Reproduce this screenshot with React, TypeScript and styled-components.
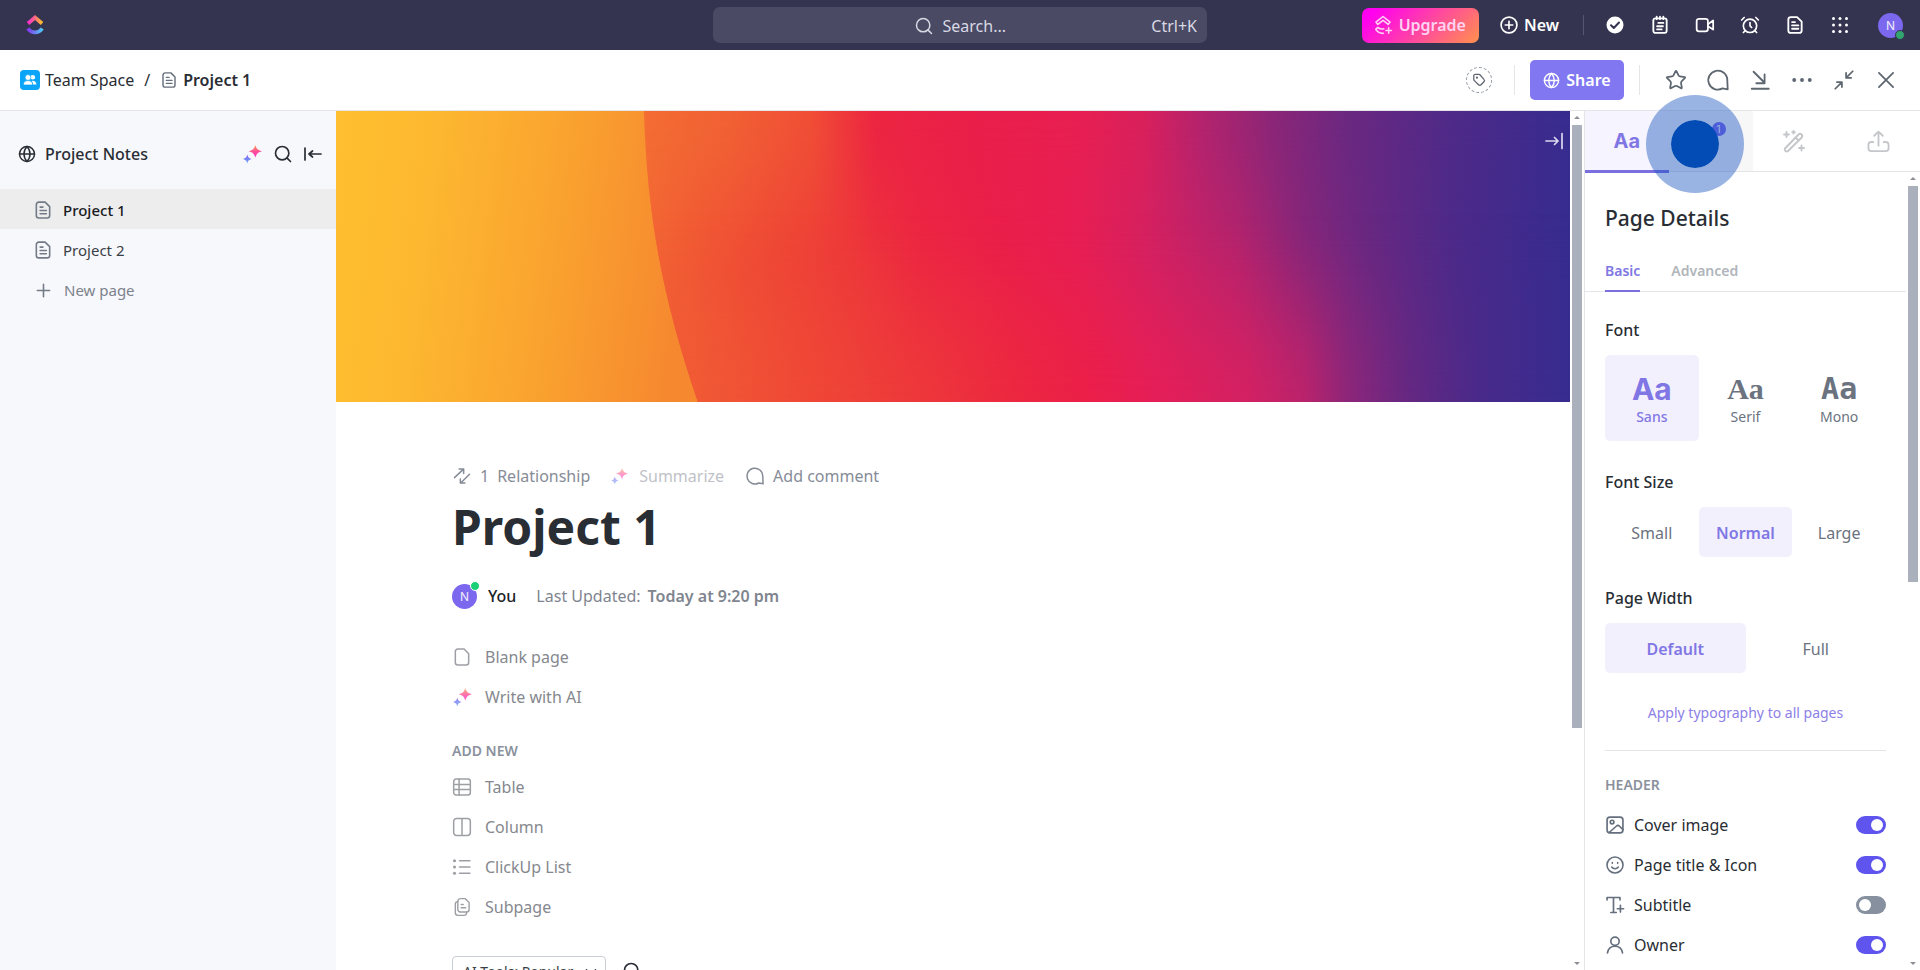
import React, { useState } from 'react';
import styled, { createGlobalStyle, css } from 'styled-components';
import { AlarmClock, ChevronDown, Globe, Plus, Search, Star } from 'lucide-react';

const GlobalStyle = createGlobalStyle`
  *, *::before, *::after { box-sizing: border-box; }
  body {
    margin: 0;
    background: #fff;
    color: #292d34;
    font-family: "Noto Sans", "Open Sans", sans-serif;
    font-size: 16px;
  }
  button, input, select { font: inherit; color: inherit; }
  button { border: 0; padding: 0; background: none; cursor: pointer; }
  a { color: inherit; text-decoration: none; }
  h1, h2, h3, p, ul { margin: 0; padding: 0; }
  ul { list-style: none; }
  svg { display: block; flex: none; }
`;

/* ---------- icons ---------- */

type GlyphProps = { size?: number; stroke?: number; children: React.ReactNode };

const Glyph = ({ size = 20, stroke = 1.8, children }: GlyphProps) => (
  <svg
    width={size}
    height={size}
    viewBox="0 0 24 24"
    fill="none"
    stroke="currentColor"
    strokeWidth={stroke}
    strokeLinecap="round"
    strokeLinejoin="round"
    aria-hidden="true"
  >
    {children}
  </svg>
);

const DocIcon = ({ size = 20, stroke = 1.9 }) => (
  <Glyph size={size} stroke={stroke}>
    <path d="M7 2.500h7.500L20 8v10.500a3 3 0 0 1-3 3H7a3 3 0 0 1-3-3v-13a3 3 0 0 1 3-3z" />
    <path d="M8.500 8.500h3.500M8.500 12.500h7.500M8.500 16.500h7.500" />
  </Glyph>
);

const BlankIcon = () => (
  <Glyph size={20}>
    <path d="M7 2.500h7.500L20 8v10.500a3 3 0 0 1-3 3H7a3 3 0 0 1-3-3v-13a3 3 0 0 1 3-3z" />
  </Glyph>
);

const SubpageIcon = () => (
  <Glyph size={20} stroke={1.7}>
    <path d="M10 2h6l4.500 4.500V15a3 3 0 0 1-3 3H10a3 3 0 0 1-3-3V5a3 3 0 0 1 3-3z" />
    <path d="M7 5.500a3 3 0 0 0-3 3V19a3 3 0 0 0 3 3h7.500a3 3 0 0 0 3-3.500" />
    <path d="M11 9h2.500M11 13h5.500" />
  </Glyph>
);

const CommentIcon = ({ size = 20, stroke = 1.8 }) => (
  <Glyph size={size} stroke={stroke}>
    <path d="M21.300 12A9.500 9.500 0 1 0 16.500 20.400L21.700 21.400z" />
  </Glyph>
);

const RelationIcon = () => (
  <Glyph size={20}>
    <path d="M3 14 13.500 4M8.500 3.500h5.500V9M21 10 10.500 20.500M15.500 20.500H10V15.500" />
  </Glyph>
);

const TableIcon = () => (
  <Glyph size={20}>
    <rect x="2" y="2.500" width="20" height="19" rx="3" />
    <path d="M2 9h20M2 15h20M8.500 2.500v19" />
  </Glyph>
);

const ColumnIcon = () => (
  <Glyph size={20}>
    <rect x="2" y="1.800" width="20" height="20.400" rx="3.500" />
    <path d="M12 2v20" />
  </Glyph>
);

const ListIcon = () => (
  <Glyph size={20}>
    <path d="M9 4.500h12.500M9 12h12.500M9 19.500h12.500" />
    <g fill="currentColor" stroke="none">
      <circle cx="3" cy="4.500" r="1.900" />
      <circle cx="3" cy="12" r="1.900" />
      <circle cx="3" cy="19.500" r="1.900" />
    </g>
  </Glyph>
);

const NotepadIcon = () => (
  <Glyph size={20} stroke={2.2}>
    <rect x="4" y="4" width="16" height="17.500" rx="2.500" />
    <path d="M8 2v3M12 2v3M16 2v3M10 9.500h6M8.500 13.500h7M8.500 17.300h5.500" />
  </Glyph>
);

const VideoIcon = () => (
  <Glyph size={20} stroke={2.1}>
    <rect x="2" y="4.500" width="13.500" height="15" rx="2.800" />
    <path d="M15.500 11 21.800 6.500v11l-6.300-4" />
  </Glyph>
);

const CheckIcon = () => (
  <svg width="18" height="18" viewBox="0 0 18 18" aria-hidden="true">
    <circle cx="9" cy="9" r="8.500" fill="#fff" />
    <path d="m5 9.200 2.800 2.800L13 6.500" fill="none" stroke="#343450" strokeWidth="2" strokeLinecap="round" strokeLinejoin="round" />
  </svg>
);

const GridIcon = () => (
  <svg width="18" height="18" viewBox="0 0 18 18" fill="currentColor" aria-hidden="true">
    {[2.5, 9, 15.5].map((y) => [2.5, 9, 15.5].map((x) => <circle key={`${x}-${y}`} cx={x} cy={y} r="1.500" />))}
  </svg>
);

const DotsIcon = () => (
  <Glyph size={22}>
    <g fill="currentColor" stroke="none">
      <circle cx="3.500" cy="12" r="2.100" />
      <circle cx="12" cy="12" r="2.100" />
      <circle cx="20.500" cy="12" r="2.100" />
    </g>
  </Glyph>
);

const CloseIcon = () => (
  <Glyph size={20} stroke={2.1}>
    <path d="m3.500 3.500 17 17M20.500 3.500l-17 17" />
  </Glyph>
);

const DownloadIcon = () => (
  <Glyph size={22} stroke={2}>
    <path d="M5 3l12 12M17 6v9.500H8M3 21.500h18.500" />
  </Glyph>
);

const ShrinkIcon = () => (
  <Glyph size={20} stroke={2.1}>
    <path d="M22.500 1.500 14.500 9.500M14.500 3.500v6h6M1.500 22.500l8-8M9.500 20.500v-6h-6" />
  </Glyph>
);

const TagIcon = () => (
  <Glyph size={14} stroke={2.2}>
    <path d="M3 5a2.500 2.500 0 0 1 2.500-2.500h6.500a3 3 0 0 1 2 .9l6.500 7.500a3 3 0 0 1 0 4.100l-5 5.200a3 3 0 0 1-4.300 0L4 13a3 3 0 0 1-1-2z" />
    <circle cx="8.500" cy="8" r=".8" />
  </Glyph>
);

const CollapseIcon = ({ flip = false }) => (
  <svg width="18" height="18" viewBox="0 0 18 18" fill="none" stroke="currentColor" strokeWidth="1.700" strokeLinecap="round" strokeLinejoin="round" aria-hidden="true">
    {flip ? <path d="M17 1.500v15M1 9h12M9.500 5.500 13 9l-3.500 3.500" /> : <path d="M1 3v12M17 9H5M8.500 6 5 9l3.500 3" />}
  </svg>
);

const UpgradeIcon = () => (
  <Glyph size={20} stroke={1.9}>
    <path d="M3.500 8.500 12 1.800l8.500 6.700-2.300 2.800L12 6.500l-6.200 4.800z" />
    <path d="M3.300 17.300 5.500 15c2.500 1.800 4.800 2.200 7.500 1.500M3.300 17.300c2.500 3.700 5.500 5 9.200 4.700M18.800 15.200v6.600M15.500 18.500h6.600" />
  </Glyph>
);

const NewIcon = () => (
  <Glyph size={20} stroke={2}>
    <circle cx="12" cy="12" r="9.500" />
    <path d="M12 7.500v9M7.500 12h9" />
  </Glyph>
);

const WandIcon = () => (
  <Glyph size={24} stroke={1.9}>
    <path d="M3 19.500 16.500 5.500a2.200 2.200 0 0 1 3.200 3L6 22a2 2 0 0 1-3-2.500zM13.500 8.500l3 3M4.500 3v5M2 5.500h5M11.500 2v2.500M10.200 3.200h2.600M19.500 16.500v5M17 19h5" />
  </Glyph>
);

const UploadIcon = () => (
  <Glyph size={23} stroke={1.9}>
    <path d="M12 16.500V2M7.500 6 12 1.700 16.500 6M6.500 12.500H4.500a3 3 0 0 0-3 3V19a3 3 0 0 0 3 3h15a3 3 0 0 0 3-3v-3.500a3 3 0 0 0-3-3H17.500" />
  </Glyph>
);

const CoverIcon = () => (
  <Glyph size={20} stroke={2}>
    <rect x="2.500" y="2.500" width="19" height="19" rx="3.500" />
    <circle cx="8.500" cy="8.500" r="2.200" />
    <path d="m5 21 8.500-7.500c1.500-1.500 2.500-1.500 4 0l4 4" />
  </Glyph>
);

const SmileIcon = () => (
  <Glyph size={20} stroke={1.9}>
    <circle cx="12" cy="12" r="9.600" />
    <path d="M8 14.500c2 2.600 6 2.600 8 0M8.800 9v1M15.200 9v1" />
  </Glyph>
);

const SubtitleIcon = () => (
  <Glyph size={20} stroke={2}>
    <path d="M2.500 6V3h15.500v3M10.200 3v18M7 21h6.500M18.500 12.500v8M14.800 16.500h7.500" />
  </Glyph>
);

const PersonIcon = () => (
  <Glyph size={20} stroke={2}>
    <circle cx="12" cy="7.500" r="5" />
    <path d="M3 21.500c.8-5 4.300-8 9-8s8.200 3 9 8" />
  </Glyph>
);

const SparkIcon = ({ size = 19, id }: { size?: number; id: string }) => (
  <svg width={size} height={size} viewBox="0 0 20 20" aria-hidden="true">
    <defs>
      <linearGradient id={`${id}-warm`} x1="0" y1="0" x2="0" y2="1">
        <stop offset="0" stopColor="#ff9a50" />
        <stop offset=".55" stopColor="#fb4b9c" />
        <stop offset="1" stopColor="#fa30d0" />
      </linearGradient>
      <linearGradient id={`${id}-cool`} x1="0" y1="0" x2="0" y2="1">
        <stop offset="0" stopColor="#7f5cf5" />
        <stop offset="1" stopColor="#6fa8f7" />
      </linearGradient>
    </defs>
    <path d="M13 0c1 3.800 2.400 5.200 7 6.500-4.600 1.300-6 2.900-7 7-1-4.100-2.400-5.700-7-7 4.600-1.300 6-2.700 7-6.500z" fill={`url(#${id}-warm)`} />
    <path d="M4.500 10c.7 2.800 1.600 3.900 4.500 4.700-2.900.8-3.800 2-4.500 4.800C3.800 16.700 2.900 15.500 0 14.700c2.900-.8 3.800-1.900 4.500-4.700z" fill={`url(#${id}-cool)`} />
  </svg>
);

const Logo = () => (
  <svg width="18" height="22" viewBox="0 0 18 22" fill="none" strokeWidth="3.800" aria-hidden="true">
    <defs>
      <linearGradient id="logo-top" x1="0" x2="1"><stop stopColor="#f92fd0" /><stop offset=".5" stopColor="#fb6a80" /><stop offset="1" stopColor="#ffc22b" /></linearGradient>
      <linearGradient id="logo-base" x1="0" x2="1"><stop stopColor="#8437ee" /><stop offset="1" stopColor="#4fc8f8" /></linearGradient>
    </defs>
    <path d="M2 9.500 9 3.500l7 6" stroke="url(#logo-top)" />
    <path d="M1.800 14.500c3.800 5.200 10.600 5.200 14.400 0" stroke="url(#logo-base)" />
  </svg>
);

const TeamBadge = () => (
  <svg width="20" height="20" viewBox="0 0 20 20" aria-hidden="true">
    <rect width="20" height="20" rx="4" fill="#0aa5f8" />
    <g fill="#fff">
      <circle cx="12.800" cy="7.300" r="2.300" />
      <path d="M12 10.800c2.600-.2 4.200 1 4.400 3.700H13z" />
      <g stroke="#0aa5f8" strokeWidth=".7">
        <circle cx="8" cy="7.500" r="2.900" />
        <path d="M3.300 15c0-3 1.700-4.400 4.700-4.400s4.700 1.400 4.700 4.400z" />
      </g>
    </g>
  </svg>
);

/* ---------- cover artwork ---------- */

type Stop = [number, string];

const warmStops: Stop[] = [[0, '#ffbf2f'], [0.08, '#fdb830'], [0.18, '#faa52f'], [0.3, '#f6882f']];
const topStops: Stop[] = [[0.25, '#f46d33'], [0.32, '#f16034'], [0.385, '#f04e36'], [0.415, '#ee363c'], [0.437, '#ec2542'], [0.49, '#eb2148'], [0.52, '#ea1f4a'], [0.6, '#e81f52'], [0.655, '#d9205c'], [0.7, '#b5236d'], [0.76, '#8b2678'], [0.82, '#6b2881'], [0.9, '#502a88'], [1, '#372c8f']];
const middleStops: Stop[] = [[0.25, '#f26634'], [0.3, '#f05434'], [0.36, '#ee4536'], [0.42, '#ed383a'], [0.475, '#ec2642'], [0.54, '#ea1f4a'], [0.6, '#e71e54'], [0.66, '#d32162'], [0.73, '#b7236c'], [0.785, '#86267a'], [0.84, '#672882'], [0.91, '#4b2a8a'], [1, '#372c8f']];
const bottomStops: Stop[] = [[0.29, '#f05a34'], [0.38, '#ef4836'], [0.48, '#ed363b'], [0.55, '#ec2740'], [0.61, '#eb1f49'], [0.66, '#e51e57'], [0.74, '#d22163'], [0.785, '#b9236c'], [0.82, '#8d2679'], [0.87, '#642882'], [0.93, '#482a8a'], [1, '#372c8f']];

const Ramp = ({ id, stops }: { id: string; stops: Stop[] }) => (
  <linearGradient id={id} gradientUnits="userSpaceOnUse" x1="0" y1="0" x2="1234" y2="0">
    {stops.map(([offset, color]) => <stop key={offset} offset={offset} stopColor={color} />)}
  </linearGradient>
);

/* Eased black-to-white fade, so that stacked ramps blend without a seam. */
const Fade = ({ id, from, to }: { id: string; from: number; to: number }) => (
  <linearGradient id={id} x1="0" y1="0" x2="0" y2="1">
    {Array.from({ length: 11 }, (_, i) => {
      const t = i / 10;
      const level = Math.round(255 * t * t * (3 - 2 * t));
      return <stop key={i} offset={from + (to - from) * t} stopColor={`rgb(${level},${level},${level})`} />;
    })}
  </linearGradient>
);

const CoverArt = () => {
  const shape = 'M308 0C311 110 329 195 362 291H1234V0Z';
  return (
    <svg width="100%" height="100%" viewBox="0 0 1234 291" preserveAspectRatio="none" aria-hidden="true">
      <defs>
        <linearGradient id="warm" gradientUnits="userSpaceOnUse" x1="0" y1="0" x2="1214" y2="160">
          {warmStops.map(([o, c]) => <stop key={o} offset={o} stopColor={c} />)}
        </linearGradient>
        <Ramp id="ramp-top" stops={topStops} />
        <Ramp id="ramp-middle" stops={middleStops} />
        <Ramp id="ramp-bottom" stops={bottomStops} />
        <Fade id="fade-middle" from={0} to={0.6} />
        <Fade id="fade-bottom" from={0.35} to={1} />
        <mask id="mask-middle" maskUnits="userSpaceOnUse" x="0" y="0" width="1234" height="291"><rect width="1234" height="291" fill="url(#fade-middle)" /></mask>
        <mask id="mask-bottom" maskUnits="userSpaceOnUse" x="0" y="0" width="1234" height="291"><rect width="1234" height="291" fill="url(#fade-bottom)" /></mask>
      </defs>
      <rect width="1234" height="291" fill="url(#warm)" />
      <path d={shape} fill="url(#ramp-top)" />
      <path d={shape} fill="url(#ramp-middle)" mask="url(#mask-middle)" />
      <path d={shape} fill="url(#ramp-bottom)" mask="url(#mask-bottom)" />
    </svg>
  );
};

/* ---------- shell ---------- */

const Shell = styled.div`
  display: flex;
  flex-direction: column;
  height: 100vh;
  overflow: hidden;
`;

const TopBar = styled.header`
  display: flex;
  align-items: center;
  flex: 0 0 50px;
  padding: 0 17px;
  background: #343450;
  color: #fff;
`;

const TopSide = styled.div<{ $end?: boolean }>`
  display: flex;
  align-items: center;
  flex: 1 1 0;
  justify-content: ${(p) => (p.$end ? 'flex-end' : 'flex-start')};
`;

const HomeLink = styled.a`
  margin-left: 9px;
`;

const SearchBox = styled.label`
  display: grid;
  grid-template-columns: 1fr auto 1fr;
  align-items: center;
  flex: 0 1 494px;
  height: 36px;
  padding: 2px 10px 0;
  border-radius: 7px;
  background: #4a4a65;
  color: #d8d9e3;
  font-size: 16px;
`;

const SearchField = styled.span`
  display: flex;
  align-items: center;
  grid-column: 2;
  gap: 9px;
`;

const SearchInput = styled.input`
  width: 64px;
  border: 0;
  padding: 0;
  background: none;
  outline: 0;
  &::placeholder { color: #d8d9e3; opacity: 1; }
`;

const Shortcut = styled.kbd`
  justify-self: end;
  font: inherit;
`;

const UpgradeButton = styled.button`
  display: flex;
  align-items: center;
  gap: 6px;
  height: 35px;
  padding: 0 13px 0 11px;
  border-radius: 7px;
  background: linear-gradient(135deg, #ff00f0 10%, #ff8a55 95%);
  color: #ffd2f3;
  font-weight: 600;
`;

const NewButton = styled.button`
  display: flex;
  align-items: center;
  gap: 5px;
  margin: 0 24px 0 20px;
  font-weight: 600;
`;

const Rule = styled.span<{ $tall?: boolean }>`
  width: 1px;
  height: ${(p) => (p.$tall ? '30px' : '20px')};
  background: ${(p) => (p.$tall ? '#e4e5e9' : '#55566f')};
`;

const QuickLinks = styled.nav`
  display: flex;
  margin-left: 8px;
  margin-right: 16px;
`;

const QuickButton = styled.button`
  display: grid;
  place-items: center;
  width: 45px;
  height: 35px;
`;

const Avatar = styled.span<{ $dot: 'low' | 'high' }>`
  position: relative;
  display: grid;
  place-items: center;
  flex: none;
  width: 25px;
  height: 25px;
  border-radius: 50%;
  background: #7b68ee;
  color: #eeeafd;
  font: 12px "Inter", sans-serif;
  &::after {
    content: "";
    position: absolute;
    width: 10px;
    height: 10px;
    border-radius: 50%;
    ${(p) => p.$dot === 'low'
      ? css`right: -2px; bottom: -2px; border: 1px solid #343450; background: #31a56d;`
      : css`right: -3px; top: -3px; border: 1px solid #fff; background: #1bce78;`}
  }
`;

const DocBar = styled.div`
  display: flex;
  align-items: center;
  justify-content: space-between;
  flex: 0 0 61px;
  padding: 0 13px 0 20px;
  border-bottom: 1px solid #e4e5e9;
`;

const Crumbs = styled.nav`
  display: flex;
  align-items: center;
  gap: 10px;
`;

const Crumb = styled.a<{ $current?: boolean }>`
  display: flex;
  align-items: center;
  gap: 5px;
  font-weight: ${(p) => (p.$current ? 600 : 400)};
  svg { color: #656f7d; }
`;

const DocActions = styled.div`
  display: flex;
  align-items: center;
  color: #5e6670;
`;

const TagButton = styled.button`
  display: grid;
  place-items: center;
  width: 26px;
  height: 26px;
  margin-right: 22px;
  border: 1px dashed #9097a1;
  border-radius: 50%;
`;

const ShareButton = styled.button`
  display: flex;
  align-items: center;
  justify-content: center;
  gap: 6px;
  width: 94px;
  height: 40px;
  margin: 0 15px;
  border-radius: 5px;
  background: #8077f1;
  color: #fff;
  font-weight: 600;
`;

const IconStrip = styled.div`
  display: flex;
  margin-left: 15px;
`;

const StripButton = styled.button`
  display: grid;
  place-items: center;
  width: 42px;
  height: 40px;
`;

const Workspace = styled.div`
  display: flex;
  flex: 1;
  min-height: 0;
`;

/* ---------- sidebar ---------- */

const Sidebar = styled.aside`
  flex: 0 0 336px;
  background: #f7f8fb;
`;

const SideHead = styled.div`
  display: flex;
  align-items: center;
  gap: 9px;
  height: 78px;
  padding: 8px 14px 0 18px;
`;

const SideTitle = styled.h2`
  flex: 1;
  font-size: 16px;
  font-weight: 500;
`;

const SideTools = styled.div`
  display: flex;
  align-items: center;
  gap: 11px;
`;

const PageLink = styled.a<{ $tone?: 'active' | 'muted' }>`
  display: flex;
  align-items: center;
  gap: 10px;
  height: 40px;
  padding-top: 2px;
  padding-left: 33px;
  font-size: 15px;
  color: ${(p) => (p.$tone === 'muted' ? '#7c828d' : '#3a3f47')};
  ${(p) => p.$tone === 'active' && css`background: #ededee; color: #191b1f; font-weight: 500;`}
  svg { color: #737b87; }
`;

/* ---------- document ---------- */

const DocPane = styled.main`
  flex: 1;
  min-width: 0;
  overflow: hidden;
`;

const Cover = styled.div`
  position: relative;
  height: 291px;
`;

const CoverToggle = styled.button`
  position: absolute;
  top: 20px;
  right: 6px;
  padding: 1px;
  color: #dcd8ee;
`;

const DocBody = styled.article`
  display: flex;
  flex-direction: column;
  align-items: flex-start;
  padding: 60px 116px 0;
`;

const MetaRow = styled.div`
  display: flex;
  align-items: center;
  gap: 21px;
  height: 28px;
`;

const MetaButton = styled.button<{ $faint?: boolean }>`
  display: flex;
  align-items: center;
  gap: ${(p) => (p.$faint ? '11px' : '8px')};
  color: ${(p) => (p.$faint ? '#c0c2c8' : '#868c97')};
  svg { opacity: ${(p) => (p.$faint ? 0.55 : 1)}; }
`;

const DocTitle = styled.h1`
  margin-top: 7px;
  font-size: 48px;
  line-height: 60px;
  font-weight: 700;
`;

const Byline = styled.div`
  display: flex;
  align-items: center;
  gap: 11px;
  height: 26px;
  margin-top: 26px;
  color: #7f858f;
`;

const Owner = styled.span`
  margin-right: 9px;
  color: #202329;
  font-weight: 500;
`;

const Updated = styled.span`
  display: flex;
  gap: 7px;
`;

const Strong = styled.strong`
  font-weight: 600;
`;

const StarterList = styled.ul<{ $first?: boolean }>`
  margin-top: ${(p) => (p.$first ? '28px' : '6px')};
`;

const StarterButton = styled.button`
  display: flex;
  align-items: center;
  gap: 13px;
  height: 40px;
  color: #85888e;
  svg { opacity: .8; }
`;

const IconSlot = styled.span`
  display: grid;
  place-items: center;
  width: 20px;
`;

const Caption = styled.h3`
  margin-top: 24px;
  font-size: 14px;
  line-height: 20px;
  font-weight: 600;
  color: #8a919d;
`;

const ToolRow = styled.div`
  display: flex;
  align-items: center;
  gap: 16px;
  margin-top: 29px;
`;

const SelectWrap = styled.span`
  position: relative;
  svg {
    position: absolute;
    top: 7px;
    right: 6px;
    pointer-events: none;
  }
`;

const ToolSelect = styled.select`
  appearance: none;
  display: block;
  width: 154px;
  height: 30px;
  padding: 0 24px 0 10px;
  border: 1px solid #c9cdd4;
  border-radius: 4px;
  background: #fff;
  color: #3a3f47;
  font-size: 14px;
`;

/* ---------- scrollbar ---------- */

const Track = styled.div`
  display: flex;
  flex-direction: column;
  align-items: center;
  flex: 0 0 14px;
  padding: 5px 0;
`;

const Thumb = styled.span<{ $share: number }>`
  flex: ${(p) => p.$share} 0 0;
  width: 10px;
  margin-top: 6px;
  background: #abb1bc;
`;

const TrackRest = styled.span<{ $share: number }>`
  flex: ${(p) => p.$share} 0 0;
`;

const Caret = styled.span<{ $down?: boolean }>`
  border: 3px solid transparent;
  ${(p) => (p.$down
    ? css`border-top-color: #8d9097; border-bottom: 0;`
    : css`border-bottom-color: #8d9097; border-top: 0;`)}
`;

const Scrollbar = ({ share }: { share: number }) => (
  <Track aria-hidden="true">
    <Caret />
    <Thumb $share={share} />
    <TrackRest $share={100 - share} />
    <Caret $down />
  </Track>
);

/* ---------- details panel ---------- */

const Panel = styled.aside`
  display: flex;
  flex-direction: column;
  flex: 0 0 336px;
  border-left: 1px solid #e4e5e9;
`;

const PanelTabs = styled.div`
  display: grid;
  grid-template-columns: repeat(4, 1fr);
  flex: 0 0 61px;
  border-bottom: 1px solid #e4e5e9;
`;

const PanelTab = styled.button<{ $active?: boolean; $hover?: boolean }>`
  position: relative;
  display: grid;
  place-items: center;
  color: #c4c6ca;
  font: 700 20px "Inter", sans-serif;
  ${(p) => p.$hover && css`background: #f7f7f8;`}
  ${(p) => p.$active && css`
    background: #f6f4fe;
    color: #8077e4;
    &::after {
      content: "";
      position: absolute;
      inset: auto 0 -2px;
      height: 3px;
      background: #7b6fe0;
    }
  `}
`;

const Badge = styled.span`
  position: absolute;
  top: 11px;
  right: 27px;
  width: 14px;
  height: 14px;
  border-radius: 50%;
  background: #7b68ee;
  color: #fff;
  font: 10px/14px "Inter", sans-serif;
`;

const ClickMark = styled.span`
  position: absolute;
  z-index: 2;
  left: 50%;
  top: 50%;
  width: 98px;
  height: 98px;
  margin: -46px 0 0 -65px;
  border: 25px solid rgba(18, 82, 190, .43);
  border-radius: 50%;
  background: #034bb5;
  background-clip: padding-box;
`;

const PanelScroll = styled.div`
  display: flex;
  flex: 1;
  min-height: 0;
`;

const PanelBody = styled.div`
  flex: 1;
  min-width: 0;
  overflow: hidden;
  padding-top: 31px;
`;

const PanelTitle = styled.h2`
  padding-left: 20px;
  font-size: 21px;
  line-height: 30px;
  font-weight: 500;
`;

const SubTabs = styled.div`
  display: flex;
  gap: 31px;
  height: 42px;
  margin-top: 17px;
  padding-left: 20px;
  border-bottom: 1px solid #e4e5e9;
`;

const SubTab = styled.button<{ $active?: boolean }>`
  height: 42px;
  border-bottom: 2px solid ${(p) => (p.$active ? '#7b6fe0' : 'transparent')};
  color: ${(p) => (p.$active ? '#8077e4' : '#b1b5bc')};
  font-size: 14px;
  font-weight: 600;
`;

const PanelInner = styled.div`
  padding: 26px 20px 0;
`;

const Field = styled.section`
  display: grid;
  gap: 13px;
  & + & { margin-top: 29px; }
`;

const FieldLabel = styled.h3`
  font-size: 16px;
  line-height: 24px;
  font-weight: 500;
`;

const Choices = styled.div<{ $count: number }>`
  display: grid;
  grid-template-columns: repeat(${(p) => p.$count}, 1fr);
`;

const Choice = styled.button<{ $on?: boolean; $tall?: boolean }>`
  display: flex;
  flex-direction: column;
  align-items: center;
  justify-content: center;
  height: ${(p) => (p.$tall ? '86px' : '50px')};
  padding-top: 2px;
  border-radius: 5px;
  background: ${(p) => (p.$on ? '#f3f0fe' : 'transparent')};
  color: ${(p) => (p.$on ? '#8077e4' : '#6b7380')};
  font-size: ${(p) => (p.$tall ? '14px' : '16px')};
  line-height: 20px;
  font-weight: ${(p) => (p.$on ? (p.$tall ? 500 : 600) : 400)};
`;

const Sample = styled.span<{ $family: string }>`
  font: 700 30px/36px ${(p) => p.$family};
`;

const ApplyButton = styled.button`
  display: block;
  margin: 28px auto 25px;
  color: #8d80e6;
  font-size: 14px;
  line-height: 24px;
`;

const Divider = styled.hr`
  margin: 0;
  border: 0;
  border-top: 1px solid #e4e5e9;
`;

const OptionList = styled.ul`
  margin-top: 10px;
`;

const Option = styled.li`
  display: flex;
  align-items: center;
  justify-content: space-between;
  height: 40px;
`;

const OptionLabel = styled.label`
  display: flex;
  align-items: center;
  gap: 9px;
  svg { color: #656f7d; }
`;

const Toggle = styled.input`
  appearance: none;
  width: 30px;
  height: 18px;
  margin: 0;
  padding: 3px;
  border-radius: 9px;
  background: #87909e;
  cursor: pointer;
  &::before {
    content: "";
    display: block;
    width: 12px;
    height: 12px;
    border-radius: 50%;
    background: #fff;
  }
  &:checked { background: #5f55ee; }
  &:checked::before { margin-left: 12px; }
`;

const options = [
  { id: 'cover', label: 'Cover image', icon: <CoverIcon />, on: true },
  { id: 'title', label: 'Page title & Icon', icon: <SmileIcon />, on: true },
  { id: 'subtitle', label: 'Subtitle', icon: <SubtitleIcon />, on: false },
  { id: 'owner', label: 'Owner', icon: <PersonIcon />, on: true },
];

const fonts = [
  { name: 'Sans', family: '"Inter", sans-serif' },
  { name: 'Serif', family: '"Liberation Serif", serif' },
  { name: 'Mono', family: '"DejaVu Sans Mono", monospace' },
];

const quickLinks = [
  { label: 'Tasks', icon: <CheckIcon /> },
  { label: 'Notepad', icon: <NotepadIcon /> },
  { label: 'Record clip', icon: <VideoIcon /> },
  { label: 'Reminders', icon: <AlarmClock size={20} strokeWidth={2} /> },
  { label: 'Docs', icon: <DocIcon stroke={2.2} /> },
  { label: 'Apps', icon: <GridIcon /> },
];

const docActions = [
  { label: 'Favorite', icon: <Star size={22} strokeWidth={1.9} /> },
  { label: 'Comments', icon: <CommentIcon size={24} /> },
  { label: 'Minimize', icon: <DownloadIcon /> },
  { label: 'More', icon: <DotsIcon /> },
  { label: 'Shrink', icon: <ShrinkIcon /> },
  { label: 'Close', icon: <CloseIcon /> },
];

const starters = [
  { label: 'Blank page', icon: <BlankIcon /> },
  { label: 'Write with AI', icon: <SparkIcon id="write" /> },
];

const blocks = [
  { label: 'Table', icon: <TableIcon /> },
  { label: 'Column', icon: <ColumnIcon /> },
  { label: 'ClickUp List', icon: <ListIcon /> },
  { label: 'Subpage', icon: <SubpageIcon /> },
];

export default function App() {
  const [font, setFont] = useState('Sans');
  const [size, setSize] = useState('Normal');
  const [width, setWidth] = useState('Default');

  return (
    <Shell>
      <GlobalStyle />
      <TopBar>
        <TopSide><HomeLink href="#home" aria-label="Home"><Logo /></HomeLink></TopSide>
        <SearchBox>
          <SearchField>
            <Search size={20} strokeWidth={1.8} />
            <SearchInput type="text" placeholder="Search..." aria-label="Search" />
          </SearchField>
          <Shortcut>Ctrl+K</Shortcut>
        </SearchBox>
        <TopSide $end>
          <UpgradeButton><UpgradeIcon />Upgrade</UpgradeButton>
          <NewButton><NewIcon />New</NewButton>
          <Rule />
          <QuickLinks>
            {quickLinks.map((q) => <QuickButton key={q.label} aria-label={q.label}>{q.icon}</QuickButton>)}
          </QuickLinks>
          <Avatar $dot="low">N</Avatar>
        </TopSide>
      </TopBar>

      <DocBar>
        <Crumbs>
          <Crumb href="#space"><TeamBadge />Team Space</Crumb>
          <span>/</span>
          <Crumb href="#project-1" $current><DocIcon size={18} />Project 1</Crumb>
        </Crumbs>
        <DocActions>
          <TagButton aria-label="Add tag"><TagIcon /></TagButton>
          <Rule $tall />
          <ShareButton><Globe size={17} strokeWidth={2} />Share</ShareButton>
          <Rule $tall />
          <IconStrip>
            {docActions.map((a) => <StripButton key={a.label} aria-label={a.label}>{a.icon}</StripButton>)}
          </IconStrip>
        </DocActions>
      </DocBar>

      <Workspace>
        <Sidebar>
          <SideHead>
            <Globe size={18} strokeWidth={2} />
            <SideTitle>Project Notes</SideTitle>
            <SideTools>
              <button aria-label="Ask AI"><SparkIcon id="side" /></button>
              <button aria-label="Search pages"><Search size={20} strokeWidth={2} /></button>
              <button aria-label="Collapse sidebar"><CollapseIcon /></button>
            </SideTools>
          </SideHead>
          <nav>
            <PageLink href="#project-1" $tone="active"><DocIcon />Project 1</PageLink>
            <PageLink href="#project-2"><DocIcon />Project 2</PageLink>
            <PageLink href="#new" $tone="muted"><Plus size={21} strokeWidth={1.8} />New page</PageLink>
          </nav>
        </Sidebar>

        <DocPane>
          <Cover>
            <CoverArt />
            <CoverToggle aria-label="Hide panel"><CollapseIcon flip /></CoverToggle>
          </Cover>
          <DocBody>
            <MetaRow>
              <MetaButton><RelationIcon /><span>1</span><span>Relationship</span></MetaButton>
              <MetaButton $faint><SparkIcon id="meta" size={17} />Summarize</MetaButton>
              <MetaButton><CommentIcon />Add comment</MetaButton>
            </MetaRow>
            <DocTitle>Project 1</DocTitle>
            <Byline>
              <Avatar $dot="high">N</Avatar>
              <Owner>You</Owner>
              <Updated>Last Updated: <Strong>Today at 9:20 pm</Strong></Updated>
            </Byline>
            <StarterList $first>
              {starters.map((b) => <li key={b.label}><StarterButton><IconSlot>{b.icon}</IconSlot>{b.label}</StarterButton></li>)}
            </StarterList>
            <Caption>ADD NEW</Caption>
            <StarterList>
              {blocks.map((b) => <li key={b.label}><StarterButton><IconSlot>{b.icon}</IconSlot>{b.label}</StarterButton></li>)}
            </StarterList>
            <ToolRow>
              <SelectWrap>
                <ToolSelect aria-label="AI tools"><option>AI Tools: Popular</option></ToolSelect>
                <ChevronDown size={18} strokeWidth={1.8} />
              </SelectWrap>
              <button aria-label="Search tools"><Search size={20} strokeWidth={2} /></button>
            </ToolRow>
          </DocBody>
        </DocPane>
        <Scrollbar share={72} />

        <Panel>
          <PanelTabs>
            <PanelTab $active>Aa</PanelTab>
            <PanelTab $hover aria-label="Comments"><Badge>1</Badge><ClickMark /></PanelTab>
            <PanelTab aria-label="AI tools"><WandIcon /></PanelTab>
            <PanelTab aria-label="Export"><UploadIcon /></PanelTab>
          </PanelTabs>
          <PanelScroll>
            <PanelBody>
              <PanelTitle>Page Details</PanelTitle>
              <SubTabs>
                <SubTab $active>Basic</SubTab>
                <SubTab>Advanced</SubTab>
              </SubTabs>
              <PanelInner>
                <Field>
                  <FieldLabel>Font</FieldLabel>
                  <Choices $count={3}>
                    {fonts.map((f) => (
                      <Choice key={f.name} $tall $on={font === f.name} aria-pressed={font === f.name} onClick={() => setFont(f.name)}>
                        <Sample $family={f.family}>Aa</Sample>
                        {f.name}
                      </Choice>
                    ))}
                  </Choices>
                </Field>
                <Field>
                  <FieldLabel>Font Size</FieldLabel>
                  <Choices $count={3}>
                    {['Small', 'Normal', 'Large'].map((s) => (
                      <Choice key={s} $on={size === s} aria-pressed={size === s} onClick={() => setSize(s)}>{s}</Choice>
                    ))}
                  </Choices>
                </Field>
                <Field>
                  <FieldLabel>Page Width</FieldLabel>
                  <Choices $count={2}>
                    {['Default', 'Full'].map((w) => (
                      <Choice key={w} $on={width === w} aria-pressed={width === w} onClick={() => setWidth(w)}>{w}</Choice>
                    ))}
                  </Choices>
                </Field>
                <ApplyButton>Apply typography to all pages</ApplyButton>
                <Divider />
                <Caption>HEADER</Caption>
                <OptionList>
                  {options.map((o) => (
                    <Option key={o.id}>
                      <OptionLabel htmlFor={o.id}>{o.icon}{o.label}</OptionLabel>
                      <Toggle type="checkbox" role="switch" id={o.id} defaultChecked={o.on} />
                    </Option>
                  ))}
                </OptionList>
              </PanelInner>
            </PanelBody>
            <Scrollbar share={51} />
          </PanelScroll>
        </Panel>
      </Workspace>
    </Shell>
  );
}
